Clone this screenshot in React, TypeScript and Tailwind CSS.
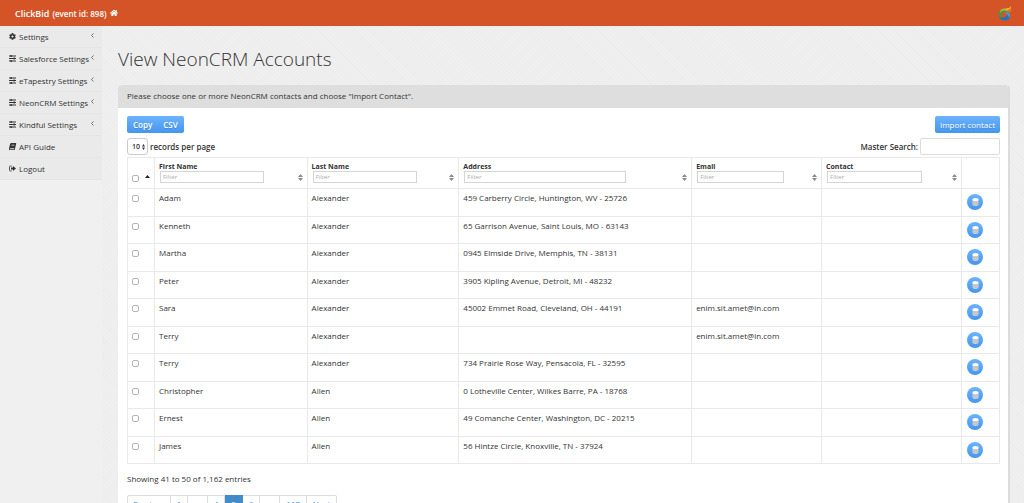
import React from "react";
import { FaCog, FaBook, FaHome } from "react-icons/fa";

const menu = [
  { label: "Settings", icon: "cog", sub: true },
  { label: "Salesforce Settings", icon: "sliders", sub: true },
  { label: "eTapestry Settings", icon: "sliders", sub: true },
  { label: "NeonCRM Settings", icon: "sliders", sub: true },
  { label: "Kindful Settings", icon: "sliders", sub: true },
  { label: "API Guide", icon: "book", sub: false },
  { label: "Logout", icon: "logout", sub: false },
];

const columns = [
  { label: "First Name", input: "w-[104px]" },
  { label: "Last Name", input: "w-[104px]" },
  { label: "Address", input: "w-[162px]" },
  { label: "Email", input: "w-[87px]" },
  { label: "Contact", input: "w-[95px]" },
];

const rows = [
  ["Adam", "Alexander", "459 Carberry Circle, Huntington, WV - 25726", "", ""],
  ["Kenneth", "Alexander", "65 Garrison Avenue, Saint Louis, MO - 63143", "", ""],
  ["Martha", "Alexander", "0945 Elmside Drive, Memphis, TN - 38131", "", ""],
  ["Peter", "Alexander", "3905 Kipling Avenue, Detroit, MI - 48232", "", ""],
  ["Sara", "Alexander", "45002 Emmet Road, Cleveland, OH - 44191", "enim.sit.amet@in.com", ""],
  ["Terry", "Alexander", "", "enim.sit.amet@in.com", ""],
  ["Terry", "Alexander", "734 Prairie Rose Way, Pensacola, FL - 32595", "", ""],
  ["Christopher", "Allen", "0 Lotheville Center, Wilkes Barre, PA - 18768", "", ""],
  ["Ernest", "Allen", "49 Comanche Center, Washington, DC - 20215", "", ""],
  ["James", "Allen", "56 Hintze Circle, Knoxville, TN - 37924", "", ""],
];

const pages = [
  { label: "Previous", width: "w-11" },
  { label: "1", width: "w-[17px]" },
  { label: "…", width: "w-5" },
  { label: "4", width: "w-[17px]" },
  { label: "5", width: "w-[18px]", current: true },
  { label: "6", width: "w-[17px]" },
  { label: "…", width: "w-5" },
  { label: "117", width: "w-[27px]" },
  { label: "Next", width: "w-[30px]" },
];

function Sliders() {
  return (
    <svg viewBox="0 0 14 14" className="size-[7px] shrink-0" fill="currentColor" aria-hidden="true">
      <path d="M0 1.2h14v1.6H0zM0 6.2h14v1.6H0zM0 11.2h14v1.6H0z" />
      <path d="M3 0h2.6v4H3zM9 5h2.6v4H9zM3 10h2.6v4H3z" />
    </svg>
  );
}

function SignOut() {
  return (
    <svg viewBox="0 0 14 14" className="size-[7px] shrink-0" aria-hidden="true">
      <path d="M5.5 2H3a2 2 0 0 0-2 2v6a2 2 0 0 0 2 2h2.5" fill="none" stroke="currentColor" strokeWidth="1.6" />
      <path d="M4 5h4V1.8L14 7l-6 5.2V9H4z" fill="currentColor" />
    </svg>
  );
}

function MenuIcon({ name }: { name: string }) {
  if (name === "cog") return <FaCog className="size-[7px] shrink-0" />;
  if (name === "book") return <FaBook className="size-[7px] shrink-0 -skew-x-12" />;
  if (name === "logout") return <SignOut />;
  return <Sliders />;
}

function Logo() {
  return (
    <svg viewBox="0 0 28 30" className="h-[15px] w-[14px]" aria-hidden="true">
      <path d="M15 5C6 5 1 11 1.500 18c.5 5 4 8 8 9-3-4-4-9-1-13 2-2 5-3 8-3z" fill="#3f9a47" />
      <path d="M4 10C7 6 11 4 17 5l-2 4c-5 0-9 1-11 5z" fill="#9cb83a" />
      <path d="M2.500 21c2 7 9 10 15 7 6-2 8-8 5-13-1-2-3-3-5-3 3 4 1 9-3 10-4 2-8 2-12-1z" fill="#1c75bc" />
      <path d="M13 14c4-3 9-2 10.500 2 1 3 0 6-2 8 0-5-3-8-8.500-10z" fill="#35a3d8" />
      <path d="M13 9c2-4 6-5 9-5l4-4c1 6-3 10-13 9z" fill="#f9b32b" />
      <path d="M15 11c6 1 9-1 12-5 0 5-4 8-12 5z" fill="#f58a2b" />
    </svg>
  );
}

function SortArrows() {
  return (
    <svg viewBox="0 0 10 14" className="h-[7px] w-[5px] shrink-0" fill="#8a8a8a" aria-hidden="true">
      <path d="M5 0l5 6H0zM5 14l5-6H0z" />
    </svg>
  );
}

function RecordIcon() {
  return (
    <svg viewBox="0 0 14 16" className="h-2 w-[7px]" aria-hidden="true">
      <path d="M1 3v10c0 1.500 2.500 3 6 3s6-1.500 6-3V3z" fill="#d6d6d6" />
      <ellipse cx="7" cy="3" rx="6" ry="3" fill="#fff" />
      <path d="M1 7c2 2 10 2 12 0M1 11c2 2 10 2 12 0" fill="none" stroke="#9b9b9b" strokeWidth="1" />
    </svg>
  );
}

const checkbox =
  "block size-[7px] appearance-none rounded-[2px] border border-[#b5b5b5] bg-white checked:bg-[#428bca]";
const blue = "bg-linear-to-b from-[#6cb3fb] to-[#4496ee] text-white";

export default function App() {
  return (
    <div className="flex min-h-screen flex-col bg-[#eeeeee] font-['Open_Sans','Noto_Sans',sans-serif] text-[8px] leading-[11px] text-[#333]">
      <header className="flex h-[26px] items-center justify-between bg-[#d45427] pr-3 pl-[15px] text-white">
        <a href="#home" className="flex items-center gap-[3px]">
          <span className="text-[9px] font-semibold">ClickBid</span>
          <span className="font-semibold">(event id: 898)</span>
          <FaHome className="size-2" />
        </a>
        <Logo />
      </header>

      <div className="flex flex-1">
        <nav className="w-[102px] shrink-0 bg-[#f0f0f0]">
          <ul className="bg-[#eaeaea]">
            {menu.map((item) => (
              <li key={item.label} className="h-[22px] border-b border-[#e5e5e5]">
                <a href="#menu" className="flex h-full items-center gap-[3px] pr-2 pl-[9px] whitespace-nowrap">
                  <MenuIcon name={item.icon} />
                  <span className="min-w-0">{item.label}</span>
                  {item.sub && (
                    <svg viewBox="0 0 6 10" className="mb-[2px] ml-auto h-[5px] w-[3px] shrink-0" fill="none" stroke="#555" strokeWidth="1.6" aria-hidden="true">
                      <path d="M5 1L1 5l4 4" />
                    </svg>
                  )}
                </a>
              </li>
            ))}
          </ul>
        </nav>

        <main className="min-w-0 flex-1 bg-[#eeeeee] bg-[repeating-linear-gradient(45deg,#ededed_0px,#ededed_1px,#efefef_1px,#efefef_3px)] pr-[14px] pl-4">
          <h1 className="pt-[19px] pb-3 text-[19px] leading-7 font-light">View NeonCRM Accounts</h1>

          <section className="overflow-hidden rounded-t-[4px] border-r-2 border-[#dcdcdc] bg-white">
            <p className="bg-[#dedede] px-[9px] pt-[5px] pb-[7px]">
              Please choose one or more NeonCRM contacts and choose "Import Contact".
            </p>

            <div className="pt-2 pr-2 pb-4 pl-[9px]">
              <div className="flex justify-between">
                <div className={"flex overflow-hidden rounded-[2px] " + blue}>
                  <button type="button" className="h-[17px] pr-[5px] pl-[6px] font-semibold text-shadow-2xs">Copy</button>
                  <button type="button" className="h-[17px] px-[6px] font-semibold text-shadow-2xs">CSV</button>
                </div>
                <button type="button" className={"h-[17px] rounded-[2px] px-[5px] font-medium text-shadow-2xs " + blue}>
                  Import contact
                </button>
              </div>

              <div className="mt-[5px] flex items-center justify-between font-semibold">
                <label className="flex items-center gap-[2px]">
                  <span className="flex h-[17px] w-[21px] items-center justify-between rounded-[3px] border border-[#ccc] bg-white pr-[2px] pl-1">
                    <select defaultValue="10" className="w-[10px] shrink-0 appearance-none text-[7px] font-semibold outline-none">
                      <option>10</option>
                      <option>25</option>
                    </select>
                    <svg viewBox="0 0 6 12" className="h-[6px] w-[3px] shrink-0" fill="#333" aria-hidden="true">
                      <path d="M3 0l3 5H0zM3 12l3-5H0z" />
                    </svg>
                  </span>
                  records per page
                </label>
                <label className="flex items-center gap-[2px]">
                  Master Search:
                  <input type="text" className="h-[17px] w-20 rounded-[2px] border border-[#ddd] bg-white px-1 font-normal outline-none" />
                </label>
              </div>

              <table className="mt-[2px] w-full table-fixed border-collapse">
                <colgroup>
                  <col className="w-[27px]" />
                  <col className="w-[17.5%]" />
                  <col className="w-[17.4%]" />
                  <col className="w-[26.7%]" />
                  <col className="w-[14.9%]" />
                  <col className="w-[16.1%]" />
                  <col />
                </colgroup>
                <thead>
                  <tr className="h-[31px]">
                    <th className="border border-[#e9e9e9] p-0">
                      <div className="flex items-center justify-between pt-[11px] pr-1 pl-1">
                        <input type="checkbox" aria-label="Select all" className={checkbox} />
                        <svg viewBox="0 0 10 6" className="mb-1 h-[3px] w-[5px]" fill="#222" aria-hidden="true">
                          <path d="M5 0l5 6H0z" />
                        </svg>
                      </div>
                    </th>
                    {columns.map((c) => (
                      <th key={c.label} className="border border-[#e9e9e9] py-0 pr-1 pl-1 text-left align-top text-[7px] font-bold">
                        <div className="pt-1 leading-[9px]">{c.label}</div>
                        <div className="flex items-center justify-between pl-px">
                          <input
                            type="text"
                            placeholder="Filter"
                            aria-label={c.label + " filter"}
                            className={"h-3 border border-[#d5d5d5] px-[2px] text-[6px] font-normal outline-none placeholder:text-[#aaa] " + c.input}
                          />
                          <SortArrows />
                        </div>
                      </th>
                    ))}
                    <th className="border border-[#e9e9e9]" aria-label="Actions" />
                  </tr>
                </thead>
                <tbody>
                  {rows.map((r, i) => (
                    <tr key={i} className="odd:h-7 even:h-[27px]">
                      <td className="border border-[#e9e9e9] pt-[6px] pl-1 align-top">
                        <input type="checkbox" aria-label={"Select " + r[0]} className={checkbox} />
                      </td>
                      {r.map((v, j) => (
                        <td key={j} className="truncate border border-[#e9e9e9] px-1 pt-[3px] align-top">
                          {v}
                        </td>
                      ))}
                      <td className="border border-[#e9e9e9] pt-[5px] pl-[5px] align-top">
                        <button type="button" aria-label="Show record" className={"flex size-4 items-center justify-center rounded-full " + blue}>
                          <RecordIcon />
                        </button>
                      </td>
                    </tr>
                  ))}
                </tbody>
              </table>

              <p className="mt-[9px]">Showing 41 to 50 of 1,162 entries</p>

              <div className="mt-[11px] flex">
                {pages.map((p, i) => (
                  <a
                    key={i}
                    href="#page"
                    className={
                      "flex h-[17px] items-center justify-center border-y border-r first:rounded-l-[2px] first:border-l last:rounded-r-[2px] " +
                      (p.current ? "border-[#428bca] bg-[#428bca] text-white " : "border-[#ddd] bg-white text-[#428bca] ") +
                      p.width
                    }
                  >
                    {p.label}
                  </a>
                ))}
              </div>
            </div>
          </section>
        </main>
      </div>
    </div>
  );
}
